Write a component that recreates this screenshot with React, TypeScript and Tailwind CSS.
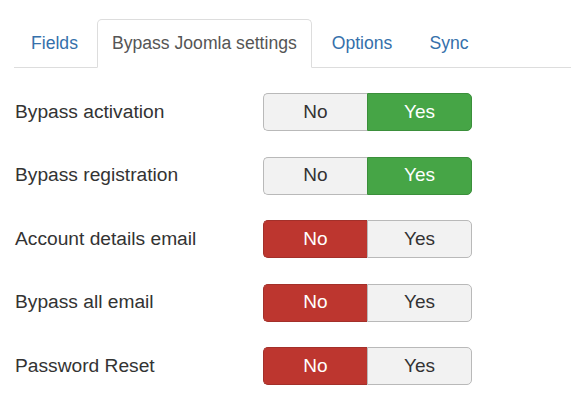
import React from "react";

const rows: { label: string; yes: boolean }[] = [
  { label: "Bypass activation", yes: true },
  { label: "Bypass registration", yes: true },
  { label: "Account details email", yes: false },
  { label: "Bypass all email", yes: false },
  { label: "Password Reset", yes: false },
];

function Toggle({ yes }: { yes: boolean }) {
  return (
    <div className="flex h-[38px] w-[209px] text-[19px]">
      <div
        className={
          yes
            ? "flex w-[104px] items-center justify-center rounded-l-[5px] border border-r-0 border-[#b9b9b9] bg-[#f2f2f2] text-[#333]"
            : "flex w-[104px] items-center justify-center rounded-l-[5px] border border-r-0 border-[#a3302a] bg-[#bd362f] text-white"
        }
      >
        No
      </div>
      <div
        className={
          yes
            ? "flex w-[105px] items-center justify-center rounded-r-[5px] border border-[#3b8f3b] bg-[#46a546] text-white"
            : "flex w-[105px] items-center justify-center rounded-r-[5px] border border-[#b9b9b9] bg-[#f2f2f2] text-[#333]"
        }
      >
        Yes
      </div>
    </div>
  );
}

export default function App() {
  return (
    <div
      className="min-h-[402px] w-[571px] bg-white pl-[14px] pt-[19px] text-[#333]"
      style={{ fontFamily: '"Liberation Sans", Arial, sans-serif' }}
    >
      <div className="flex border-b border-[#dddddd] text-[17.6px]">
        <div className="mr-[4px] pl-[17px] pr-[15px] pb-[11px] pt-[11px] leading-[26px] text-[#3570ab]">Fields</div>
        <div className="mr-[4px] -mb-px rounded-t-[5px] border border-b-white border-[#dddddd] bg-white px-[14px] pb-[11px] pt-[10px] leading-[26px] text-[#555]">
          Bypass Joomla settings
        </div>
        <div className="mr-[4px] px-[16px] pb-[11px] pt-[11px] leading-[26px] text-[#3570ab]">Options</div>
        <div className="mr-[4px] pl-[17px] pr-[16px] pb-[11px] pt-[11px] leading-[26px] text-[#3570ab]">Sync</div>
      </div>
      <div className="mt-[25px] flex flex-col gap-[25.5px] text-[19.2px]">
        {rows.map((r) => (
          <div key={r.label} className="flex items-center">
            <div className="w-[249px] pl-[1px]">{r.label}</div>
            <Toggle yes={r.yes} />
          </div>
        ))}
      </div>
    </div>
  );
}
